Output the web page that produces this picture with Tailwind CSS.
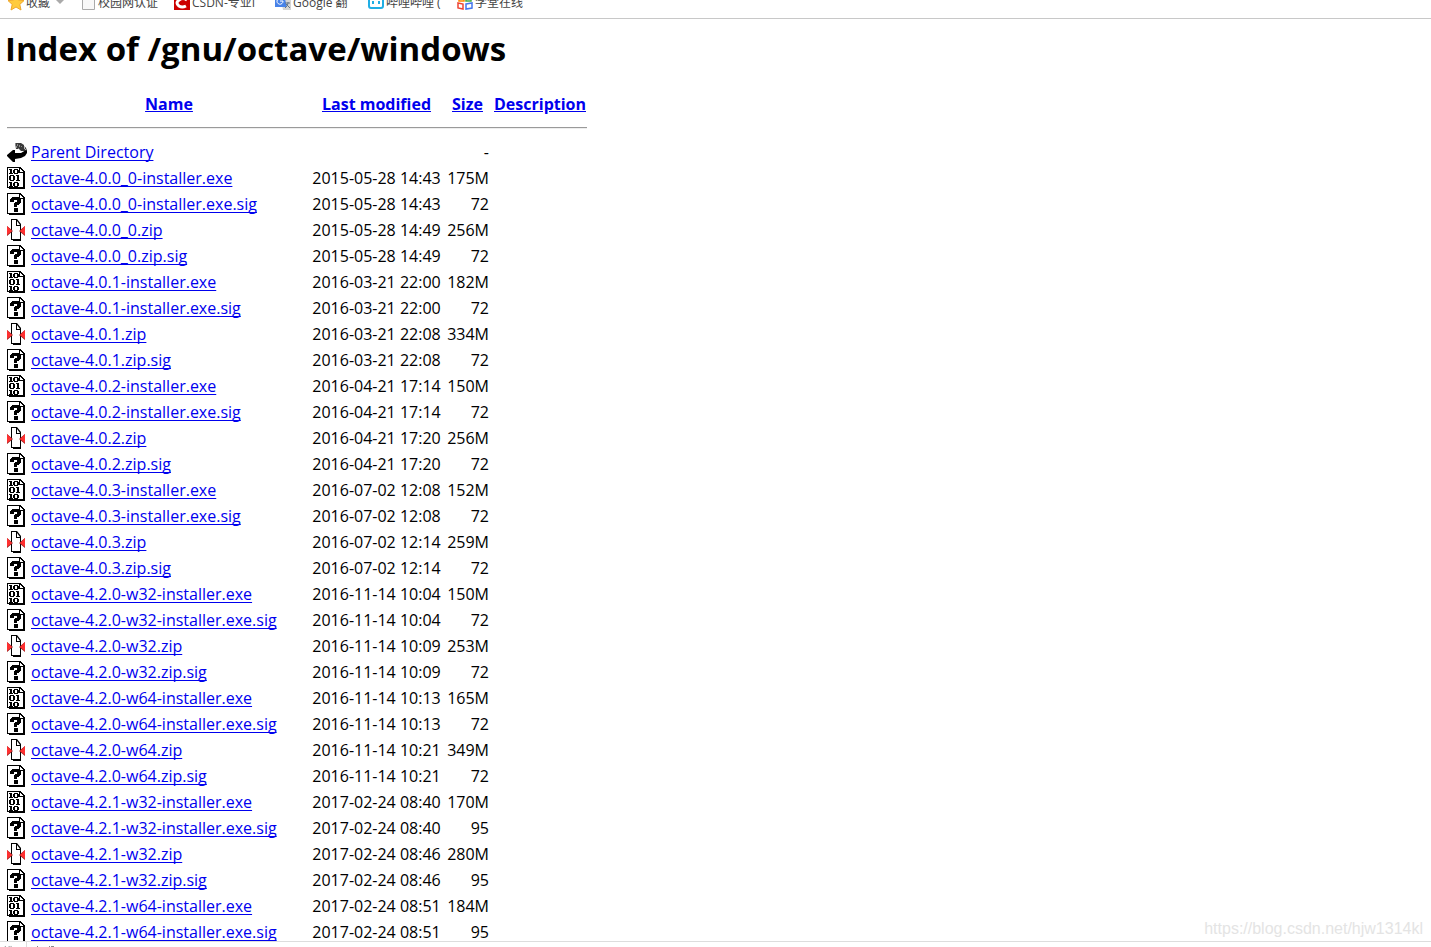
<!DOCTYPE html>
<html lang="en">
<head>
<meta charset="utf-8">
<title>Index of /gnu/octave/windows</title>
<script src="https://cdn.jsdelivr.net/npm/@tailwindcss/browser@4"></script>
</head>
<body class="flex h-screen flex-col overflow-hidden bg-white font-['Open_Sans','Noto_Sans_CJK_SC',sans-serif] text-black">
<svg class="hidden" aria-hidden="true">
  <symbol id="back" viewBox="0 0 20 22">
    <path d="M8 2h6l3 2v3l2 3h-5l-2-2H9z" fill="#3a3a3a"/>
    <path d="M8 2h1v2H8zM10 3h1v2h-1zM9 5h1v2H9zM12 4h1v2h-1zM14 5h1v1h-1zM11 7h1v1h-1z" fill="#8a8a8a"/>
    <path d="M17 5l2 2 1 3v2l-2 3-4 2-6 1v3H6L0 15v-1l6-5h2v3h6l5-3z" fill="#000"/>
  </symbol>
  <symbol id="bin" viewBox="0 0 20 22" shape-rendering="crispEdges">
    <path d="M0 0h13l5 5v17H2v-1H0z" fill="#000"/><path d="M1 1h11v5h4v14H1z" fill="#fff"/><path d="M13 2l3 3h-3z" fill="#fff"/>
    <path d="M2 2h3v4h1v1H2V6h1V3H2zM7 2h4v1h1v3h-1v1H7V6H6V3h1zM3 8h4v1h1v4H7v1H3v-1H2V9h1zM9 8h3v5h1v1H9v-1h1V9H9zM2 15h3v4h1v1H2v-1h1v-3H2zM7 15h4v1h1v3h-1v1H7v-1H6v-3h1z" fill="#000"/>
    <path d="M8 3h2v3H8zM4 9h2v4H4zM8 16h2v3H8z" fill="#fff"/>
  </symbol>
  <symbol id="unknown" viewBox="0 0 20 22" shape-rendering="crispEdges">
    <path d="M0 0h13l5 5v17H2v-1H0z" fill="#000"/><path d="M1 1h11v5h4v14H1z" fill="#fff"/><path d="M13 2l3 3h-3z" fill="#fff"/>
    <path d="M5 4h7v1h1v1h1v4h-1v1h-1v1h-2v2H7v-4h1V9h2V7H7v2H3V6h1V5h1zM7 15h4v4H7z" fill="#000"/>
  </symbol>
  <symbol id="zip" viewBox="0 0 20 22">
    <path d="M4 0h6l4 5v17H6v-1H4z" fill="#000"/><path d="M5 1h4v6h4v13H5z" fill="#fff"/><path d="M10 2l3 4h-3z" fill="#fff"/>
    <path d="M0 7v10l6-5zM18 7v10l-6-5z" fill="#922"/>
    <path d="M0 7l5 5-5 4zM18 7l-5 5 5 4z" fill="#ff3030"/>
  </symbol>
</svg>

<nav aria-label="Bookmarks" class="h-[19px] shrink-0 overflow-hidden border-b border-[#c8c8c8] text-xs leading-4 text-[#444]">
  <ul class="-mt-[5px] flex pl-2 whitespace-nowrap">
    <li class="w-[74px]"><a href="#" class="flex items-center gap-0.5"><svg class="size-4" viewBox="0 0 16 16"><path d="M8 0l2.400 5 5.600.6-4.200 3.800L13 15l-5-3-5 3 1.200-5.600L0 5.600 5.600 5z" fill="#ffcb3d" stroke="#efa72c"/></svg>收藏<svg class="mb-0.5 ml-1 h-1 w-2" viewBox="0 0 8 4"><path d="M0 0h8L4 4z" fill="#aaa"/></svg></a></li>
    <li class="w-[92px]"><a href="#" class="flex items-center gap-0.5"><svg class="h-4 w-3.5" viewBox="0 0 14 16"><path d="M.5.5h8l4 4v10H.5z" fill="#f8f8f8" stroke="#aaa"/></svg>校园网认证</a></li>
    <li class="w-[101px]"><a href="#" class="flex items-center gap-0.5"><svg class="size-4" viewBox="0 0 16 16"><path d="M0 0h16v15H0z" fill="#c00"/><path d="M13 5Q9 2 5 5t0 6q3 2 7 0" fill="none" stroke="#fff" stroke-width="3"/></svg>CSDN-专业I</a></li>
    <li class="w-[93px]"><a href="#" class="flex items-center gap-0.5"><svg class="size-4" viewBox="0 0 16 16"><path d="M6 5h10v10H8z" fill="#d4d4d4"/><path d="M0 0h9l3 12H0z" fill="#4782e8"/><path d="M8 6a3 3 0 1 1-1-2M5 6h3" fill="none" stroke="#fff"/><path d="M10 8h5m-2-1v1q0 3-3 5m1-4 4 4" fill="none" stroke="#678"/></svg>Google 翻</a></li>
    <li class="w-[89px]"><a href="#" class="flex items-center gap-0.5"><svg class="size-4" viewBox="0 0 16 16"><rect x="1" y="3" width="14" height="10" rx="2" fill="#fff" stroke="#20aee5" stroke-width="2"/><path d="M5 6v3M11 6v3" stroke="#20aee5" stroke-width="2"/></svg>哔哩哔哩 (</a></li>
    <li><a href="#" class="flex items-center gap-0.5"><svg class="size-4" viewBox="0 0 16 16" fill="none" stroke-width="1.500"><path d="M2 2l5 1v3H2z" stroke="#f80"/><path d="M9 3l5-1v4H9z" stroke="#4a4"/><path d="M1 8l5 1v5l-5-1z" stroke="#e43"/><path d="M9 9l6-1v5l-6 1z" stroke="#47e"/></svg>学堂在线</a></li>
  </ul>
</nav>

<main class="relative min-h-0 flex-1 overflow-hidden px-[5px] pt-2">
  <h1 class="text-[33px] leading-[44px] font-bold">Index of /gnu/octave/windows</h1>
  <table class="mt-5 w-[584px] table-fixed border-collapse text-base leading-[26px]">
    <colgroup><col class="w-6"><col class="w-[280px]"><col class="w-[135px]"><col class="w-[47px]"><col class="w-[98px]"></colgroup>
    <thead>
      <tr class="h-[26px] whitespace-nowrap text-[#0000ee] underline">
        <td></td>
        <th class="p-0"><a href="#">Name</a></th>
        <th class="p-0"><a href="#">Last modified</a></th>
        <th class="p-0"><a href="#">Size</a></th>
        <th class="p-0"><a href="#">Description</a></th>
      </tr>
      <tr class="h-[22px]"><th colspan="5" class="px-0.5 py-0"><hr class="h-0.5 border-t border-b border-t-[#9a9a9a] border-b-[#eee]"></th></tr>
    </thead>
    <tbody id="files"></tbody>
  </table>
  <p class="absolute right-2 bottom-0.5 font-['Liberation_Sans',sans-serif] text-base leading-5 text-[#e4e4e4]">https://blog.csdn.net/hjw1314kl</p>
</main>
<footer class="flex h-1.5 shrink-0 overflow-hidden border-t border-[#ddd]">
  <svg class="h-1.5 w-[27px] border-r border-[#ddd]" viewBox="0 0 27 6" aria-hidden="true"><path d="M5 4.500h1M9 4.500h1M11 4.500h1" stroke="#888"/></svg>
  <svg class="h-1.5 w-8" viewBox="0 0 32 6" aria-hidden="true"><path d="M10 4.500h1M22 4.500h1M24 4.500h3" stroke="#888"/></svg>
</footer>

<script>
const files = [
  ['4.0.0_0', '2015-05-28', '14:43', '175M', '14:49', '256M', '72'],
  ['4.0.1', '2016-03-21', '22:00', '182M', '22:08', '334M', '72'],
  ['4.0.2', '2016-04-21', '17:14', '150M', '17:20', '256M', '72'],
  ['4.0.3', '2016-07-02', '12:08', '152M', '12:14', '259M', '72'],
  ['4.2.0-w32', '2016-11-14', '10:04', '150M', '10:09', '253M', '72'],
  ['4.2.0-w64', '2016-11-14', '10:13', '165M', '10:21', '349M', '72'],
  ['4.2.1-w32', '2017-02-24', '08:40', '170M', '08:46', '280M', '95'],
  ['4.2.1-w64', '2017-02-24', '08:51', '184M', '', '', '95'],
];
const row = (icon, name, date, size) => `<tr class="h-[26px] whitespace-nowrap">
  <td class="py-0 pr-0 pl-0.5"><svg class="h-[22px] w-5" aria-hidden="true"><use href="#${icon}"/></svg></td>
  <td class="px-0.5 py-0"><a href="#" class="text-[#0000ee] underline underline-offset-2 [text-decoration-skip-ink:none]">${name}</a></td>
  <td class="px-0.5 py-0 text-center">${date}</td>
  <td class="px-0.5 py-0 text-right">${size}</td><td></td></tr>`;
let html = row('back', 'Parent Directory', '', '-');
for (const [v, day, t1, s1, t2, s2, sig] of files) {
  const exe = `octave-${v}-installer.exe`, zip = `octave-${v}.zip`;
  html += row('bin', exe, `${day} ${t1}`, s1) + row('unknown', exe + '.sig', `${day} ${t1}`, sig);
  if (t2) html += row('zip', zip, `${day} ${t2}`, s2) + row('unknown', zip + '.sig', `${day} ${t2}`, sig);
}
document.getElementById('files').innerHTML = html;
</script>
</body>
</html>
